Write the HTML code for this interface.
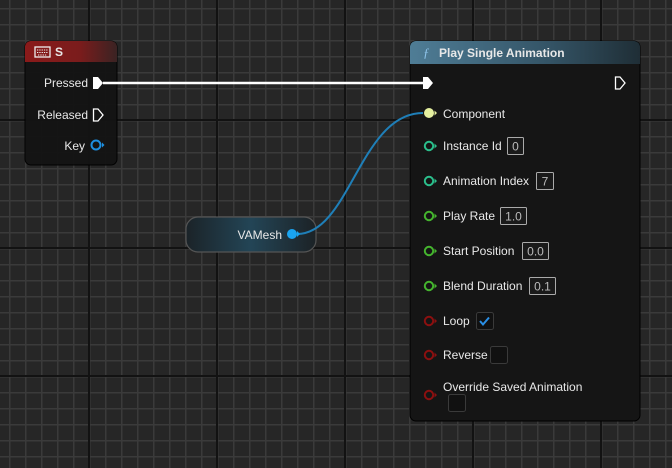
<!DOCTYPE html>
<html><head><meta charset="utf-8"><style>
body{margin:0;width:672px;height:468px;overflow:hidden;background:#262626;font-family:"Liberation Sans",sans-serif;}
svg{position:absolute;left:0;top:0}
.t{font-size:12px;fill:#e8e8e8}
.v{font-size:12px;fill:#bbb}
</style></head><body>
<svg width="672" height="468" xmlns="http://www.w3.org/2000/svg">
<defs>
<pattern id="mg" x="9" y="8" width="16" height="16" patternUnits="userSpaceOnUse">
<rect x="0" y="0" width="1.5" height="16" fill="#3a3a3a"/><rect x="0" y="0" width="16" height="1.5" fill="#3a3a3a"/>
</pattern>
<linearGradient id="red" x1="0" y1="0" x2="1" y2="0"><stop offset="0" stop-color="#8a1a1a"/><stop offset="0.6" stop-color="#7a1c1c"/><stop offset="1" stop-color="#3a2323"/></linearGradient>
<linearGradient id="blue" x1="0" y1="0" x2="1" y2="0"><stop offset="0" stop-color="#4f7d96"/><stop offset="0.6" stop-color="#345466"/><stop offset="1" stop-color="#1f2e36"/></linearGradient>
<linearGradient id="vm" x1="0" y1="0" x2="1" y2="0"><stop offset="0" stop-color="#1b2328"/><stop offset="0.5" stop-color="#234556"/><stop offset="1" stop-color="#1c2226"/></linearGradient>
</defs>
<rect width="672" height="468" fill="#262626"/>
<rect width="672" height="468" fill="url(#mg)"/>
<g fill="#121212">
<rect x="88" y="0" width="2" height="468"/><rect x="216" y="0" width="2" height="468"/><rect x="344" y="0" width="2" height="468"/><rect x="472" y="0" width="2" height="468"/><rect x="600" y="0" width="2" height="468"/>
<rect x="0" y="119" width="672" height="2"/><rect x="0" y="247" width="672" height="2"/><rect x="0" y="375" width="672" height="2"/>
</g>

<!-- S node -->
<rect x="25" y="41" width="92" height="124" rx="6" fill="#141414" stroke="#000" opacity="0.95"/>
<path d="M31 41h80a6 6 0 0 1 6 6v15h-92v-15a6 6 0 0 1 6-6z" fill="url(#red)"/>
<rect x="35" y="47" width="15" height="10" fill="none" stroke="#eee" stroke-width="1.3"/>
<path d="M37 50h11M37 52.5h11M38 55h9" stroke="#eee" stroke-width="1" stroke-dasharray="1.3 1"/>
<text x="55" y="56" class="t" font-weight="bold">S</text>
<text x="88" y="87" class="t" text-anchor="end">Pressed</text>
<text x="88" y="119" class="t" text-anchor="end">Released</text>
<text x="85" y="150" class="t" text-anchor="end">Key</text>

<!-- VAMesh node -->
<rect x="186" y="217" width="130" height="35" rx="12" fill="url(#vm)" stroke="#555" stroke-width="1.2"/>
<text x="282" y="239" class="t" text-anchor="end">VAMesh</text>

<!-- Play Single Animation -->
<rect x="410" y="41" width="230" height="380" rx="6" fill="#151515" stroke="#000"/>
<path d="M416 41h218a6 6 0 0 1 6 6v17h-230v-17a6 6 0 0 1 6-6z" fill="url(#blue)"/>
<text x="423" y="57" font-size="13" font-style="italic" fill="#8ec4ea" font-family="Liberation Serif,serif">ƒ</text>
<text x="439" y="57" class="t" font-weight="bold" font-size="12.5">Play Single Animation</text>

<!-- wires -->
<path d="M103 83H423" stroke="#fff" stroke-width="2.5"/>
<path d="M297 234C350 234 360 113 423 113" fill="none" stroke="#1f7fb8" stroke-width="2"/>

<!-- pins -->
<path d="M93 77h5l5 6-5 6h-5z" fill="#fff"/>
<path d="M93.5 109h4.5l5 6-5 6h-4.5z" fill="none" stroke="#fff" stroke-width="1.3"/>
<circle cx="96" cy="145" r="4.5" fill="none" stroke="#1d8fe0" stroke-width="2"/><path d="M102 142.5l2.5 2.5-2.5 2.5z" fill="#1d8fe0"/>
<circle cx="292" cy="234" r="5" fill="#1aa4f0"/><path d="M297 231l3 3-3 3z" fill="#1aa4f0"/>

<path d="M423 77h5l5 6-5 6h-5z" fill="#fff"/>
<path d="M615.5 77h4.5l5 6-5 6h-4.5z" fill="none" stroke="#fff" stroke-width="1.3"/>
<circle cx="429" cy="113" r="5" fill="#e5f0a0"/><path d="M434.5 110.5l2.5 2.5-2.5 2.5z" fill="#e5f0a0"/>
<text x="443" y="118" class="t">Component</text>
<g fill="none" stroke-width="2">
<circle cx="429" cy="146" r="4.2" stroke="#2bbf8c"/><circle cx="429" cy="181" r="4.2" stroke="#2bbf8c"/>
<circle cx="429" cy="216" r="4.2" stroke="#45b52e"/><circle cx="429" cy="251" r="4.2" stroke="#45b52e"/><circle cx="429" cy="286" r="4.2" stroke="#45b52e"/>
<circle cx="429" cy="321" r="4.2" stroke="#8c1010"/><circle cx="429" cy="355" r="4.2" stroke="#8c1010"/><circle cx="429" cy="395" r="4.2" stroke="#8c1010"/>
</g>
<g>
<path d="M434.5 143.5l2.5 2.5-2.5 2.5z M434.5 178.5l2.5 2.5-2.5 2.5z" fill="#2bbf8c"/>
<path d="M434.5 213.5l2.5 2.5-2.5 2.5z M434.5 248.5l2.5 2.5-2.5 2.5z M434.5 283.5l2.5 2.5-2.5 2.5z" fill="#45b52e"/>
<path d="M434.5 318.5l2.5 2.5-2.5 2.5z M434.5 352.5l2.5 2.5-2.5 2.5z M434.5 392.5l2.5 2.5-2.5 2.5z" fill="#8c1010"/>
</g>
<text x="443" y="150" class="t">Instance Id</text>
<text x="443" y="185" class="t">Animation Index</text>
<text x="443" y="220" class="t">Play Rate</text>
<text x="443" y="255" class="t">Start Position</text>
<text x="443" y="290" class="t">Blend Duration</text>
<text x="443" y="325" class="t">Loop</text>
<text x="443" y="359" class="t">Reverse</text>
<text x="443" y="391" class="t">Override Saved Animation</text>
<g fill="#1a1a1a" stroke="#aaa" stroke-width="1">
<rect x="507.5" y="137.5" width="16" height="17" rx="1"/>
<rect x="536.5" y="172.5" width="17" height="17" rx="1"/>
<rect x="500.5" y="207.5" width="26" height="17" rx="1"/>
<rect x="522.5" y="242.5" width="26" height="17" rx="1"/>
<rect x="529.5" y="277.5" width="26" height="17" rx="1"/>
</g>
<text x="515.5" y="150.5" class="v" text-anchor="middle">0</text>
<text x="545" y="185.5" class="v" text-anchor="middle">7</text>
<text x="513.5" y="220.5" class="v" text-anchor="middle">1.0</text>
<text x="535.5" y="255.5" class="v" text-anchor="middle">0.0</text>
<text x="542.5" y="290.5" class="v" text-anchor="middle">0.1</text>
<g fill="#111" stroke="#3a3a3a" stroke-width="1">
<rect x="476.5" y="312.5" width="17" height="17" rx="2"/>
<rect x="490.5" y="346.5" width="17" height="17" rx="2"/>
<rect x="448.5" y="394.5" width="17" height="17" rx="2"/>
</g>
<path d="M480 321l3 3.5 6-7" fill="none" stroke="#2a8fe6" stroke-width="2"/>
</svg>
</body></html>
